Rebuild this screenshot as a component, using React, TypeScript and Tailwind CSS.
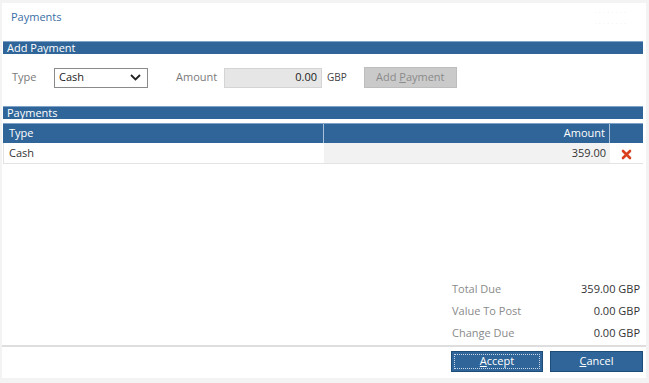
import React from "react";

const font = { fontFamily: '"Open Sans", "Noto Sans", Arial, sans-serif' };

function Bar({ title }: { title: string }) {
  return (
    <div className="ml-px w-[640px] h-[13px] bg-[#2f6598] border-t border-[#7fa3c8] text-white text-[11px] leading-[12px] pl-[4px]">
      {title}
    </div>
  );
}

function RemoveIcon() {
  return (
    <svg width="11" height="11" viewBox="0 0 11 11">
      <path d="M2 2 L9 9 M9 2 L2 9" stroke="#d8401e" strokeWidth="2.6" strokeLinecap="round" />
    </svg>
  );
}

const totals = [
  { label: "Total Due", value: "359.00 GBP" },
  { label: "Value To Post", value: "0.00 GBP" },
  { label: "Change Due", value: "0.00 GBP" },
];

export default function App() {
  return (
    <div className="w-[649px] h-[383px] bg-[#f3f3f3] pt-[3px] pl-[2px] overflow-hidden" style={font}>
      <div className="w-[644px] h-[375px] bg-white flex flex-col">
        {/* header */}
        <div className="h-[38px] flex items-start justify-between">
          <div className="pl-[9px] pt-[6px] text-[11px] text-[#3a6ea5]">Payments</div>
          <div className="pr-[20px] pt-[3px] flex flex-col text-[8px] leading-[11px] text-[#e9edf2]">
            <span>· · · · · · · ·</span>
            <span>· · · · · · · ·</span>
          </div>
        </div>

        <Bar title="Add Payment" />

        {/* add payment form */}
        <div className="mt-[13px] h-[21px] flex items-center text-[11px]">
          <span className="ml-[10px] w-[42px] text-[#7a7a7a]">Type</span>
          <div className="w-[94px] h-[20px] border border-[#8a8a8a] flex items-center justify-between pl-[4px] pr-[6px] text-[#222]">
            <span>Cash</span>
            <svg width="11" height="7" viewBox="0 0 11 7">
              <path d="M1 1 L5.5 5.5 L10 1" stroke="#222" strokeWidth="1.8" fill="none" />
            </svg>
          </div>
          <span className="ml-[28px] w-[48px] text-[#7a7a7a]">Amount</span>
          <div className="w-[98px] h-[20px] bg-[#e6e6e6] border border-[#d4d4d4] flex items-center justify-end pr-[4px] text-[#222]">
            0.00
          </div>
          <span className="ml-[5px] text-[10px] text-[#444]">GBP</span>
          <div className="ml-[17px] w-[93px] h-[21px] bg-[#cacaca] border border-[#bdbdbd] flex items-center justify-center text-[#8a8a8a]">
            Add&nbsp;<span className="underline">P</span>ayment
          </div>
        </div>

        <div className="mt-[18px]">
          <Bar title="Payments" />
        </div>

        {/* table */}
        <div className="mt-[4px] ml-px w-[640px] text-[11px]">
          <div className="h-[20px] flex bg-[#2f6598] text-white border-t border-[#7fa3c8]">
            <div className="w-[320px] pl-[6px] flex items-center">Type</div>
            <div className="w-px bg-[#a9c1da]" />
            <div className="w-[285px] pr-[4px] flex items-center justify-end">Amount</div>
            <div className="w-px bg-[#a9c1da]" />
            <div className="flex-1" />
          </div>
          <div className="h-[21px] flex border-l border-b border-[#e3e3e3] text-[#333]">
            <div className="w-[320px] pl-[5px] flex items-center">Cash</div>
            <div className="w-[286px] pr-[4px] bg-[#f2f2f2] flex items-center justify-end">359.00</div>
            <div className="flex-1 flex items-center justify-center pt-[2px]">
              <RemoveIcon />
            </div>
          </div>
        </div>

        {/* totals */}
        <div className="mt-auto flex flex-col text-[11px]">
          {totals.map((t) => (
            <div key={t.label} className="h-[22px] flex items-center pl-[450px] pr-[6px]">
              <span className="text-[#8a8a8a] flex-1">{t.label}</span>
              <span className="text-[#333]">{t.value}</span>
            </div>
          ))}
        </div>

        <div className="mt-[1px] h-[2px] bg-[#dedede]" />

        <div className="h-[31px] flex items-start justify-end gap-[7px] pr-[3px] pt-[4px] text-[11px] text-white">
          <div className="w-[92px] h-[21px] bg-[#2f6598] border border-[#1f4d7a] p-[2px]">
            <div className="w-full h-full border border-dotted border-[#c9d8e8] flex items-center justify-center">
              <span className="underline">A</span>ccept
            </div>
          </div>
          <div className="w-[93px] h-[21px] bg-[#2f6598] border border-[#1f4d7a] flex items-center justify-center">
            <span className="underline">C</span>ancel
          </div>
        </div>
      </div>
    </div>
  );
}
